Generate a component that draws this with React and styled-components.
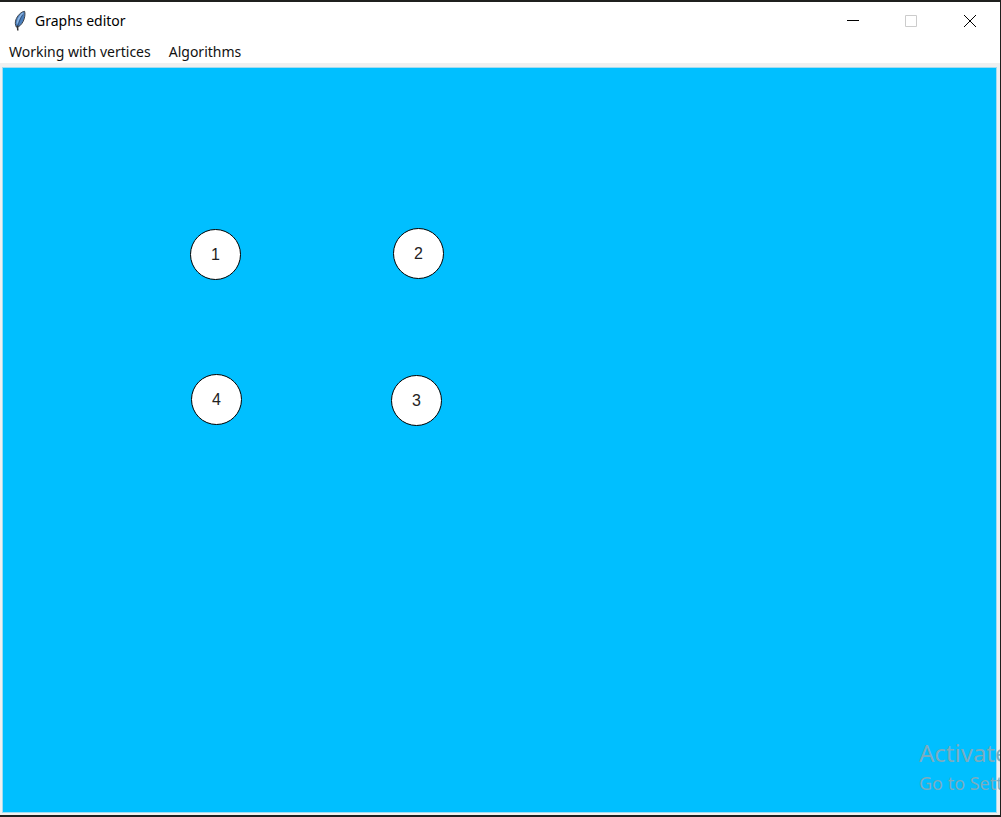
import React from "react";
import styled, { createGlobalStyle } from "styled-components";

const GlobalStyle = createGlobalStyle`
  *, *::before, *::after { box-sizing: border-box; }
  body { margin: 0; background: #1f201e; }
`;

const Window = styled.main`
  position: relative;
  display: flex;
  flex-direction: column;
  min-height: 100vh;
  overflow: hidden;
  border: solid #1f201e;
  border-width: 2px 1px 2px 0;
  background: #fff;
  color: #000;
  font-family: "Open Sans", "Noto Sans", sans-serif;
`;

const TitleBar = styled.header`
  display: flex;
  align-items: center;
  height: 38px;
  padding-left: 12px;
`;

const Title = styled.h1`
  flex: 1;
  margin: 0 0 0 7px;
  font-family: "Noto Sans", sans-serif;
  font-size: 14px;
  font-weight: 400;
  line-height: 20px;
`;

const Controls = styled.div`
  display: flex;
  height: 100%;
`;

const ControlButton = styled.button`
  display: grid;
  place-items: center;
  width: 59px;
  padding: 0;
  border: 0;
  background: none;
  color: ${({ disabled }) => (disabled ? "#ccc" : "#000")};
`;

const MenuBar = styled.nav`
  display: flex;
  gap: 18px;
  height: 23px;
  padding-left: 9px;
`;

const MenuButton = styled.button`
  padding: 0;
  border: 0;
  background: none;
  color: #111;
  font: 400 14px/24px "Noto Sans", sans-serif;
`;

const CanvasFrame = styled.section`
  display: flex;
  flex: 1;
  padding: 4px 3px 2px 2px;
  background: #f0f0f0;
`;

const Canvas = styled.div`
  position: relative;
  flex: 1;
  border: 1px solid #a2dcf0;
  background: #00bfff;
`;

const Vertex = styled.div`
  position: absolute;
  left: ${({ $x }) => $x}px;
  top: ${({ $y }) => $y}px;
  display: grid;
  place-items: center;
  width: 51px;
  height: 51px;
  border: 1px solid #000;
  border-radius: 50%;
  background: #fff;
  color: #222;
  font: 16px/20px "Liberation Sans", Arial, sans-serif;
`;

const Watermark = styled.aside`
  position: absolute;
  right: -1px;
  bottom: 18px;
  width: 82px;
  overflow: hidden;
  color: #7aacbf;
  font-family: "Noto Sans", sans-serif;
  font-weight: 400;
  white-space: nowrap;
  pointer-events: none;
`;

const WatermarkTitle = styled.p`
  margin: 0;
  font-size: 24px;
  line-height: 32px;
`;

const WatermarkText = styled.p`
  margin: 0;
  font-size: 18px;
  line-height: 28px;
`;

const vertices = [
  { id: 1, x: 187, y: 161 },
  { id: 2, x: 390, y: 160 },
  { id: 3, x: 388, y: 307 },
  { id: 4, x: 188, y: 306 },
];

function FeatherIcon() {
  return (
    <svg width="16" height="22" viewBox="0 0 16 22" aria-hidden="true">
      <path d="M12.6 1.3C9 1.8 5.2 5.8 3.8 10c-.8 2.5-.6 4.8.5 7l1.4.3c3.2-1.8 5.5-5 6.5-8.5.8-2.7 1-5.6.4-7.5Z" fill="#4a7fbd" stroke="#3d434b" />
      <path d="M11 3.2C8 6 6 9 5.4 13.5" fill="none" stroke="#8db5e2" strokeWidth="1.8" />
      <path d="M10.8 4.5C8.2 9 6.6 12.5 5.8 16.5" fill="none" stroke="#29466c" strokeWidth="0.8" />
      <path d="M5.4 15.5 5.8 20.5" stroke="#333" strokeWidth="1.5" />
    </svg>
  );
}

function ControlIcon({ d }) {
  return (
    <svg width="13" height="14" viewBox="0 0 13 14" aria-hidden="true">
      <path d={d} fill="none" stroke="currentColor" />
    </svg>
  );
}

export default function App() {
  return (
    <>
      <GlobalStyle />
      <Window>
        <TitleBar>
          <FeatherIcon />
          <Title>Graphs editor</Title>
          <Controls>
            <ControlButton aria-label="Minimize"><ControlIcon d="M1 6.5H13" /></ControlButton>
            <ControlButton aria-label="Maximize" disabled><ControlIcon d="M.5 1.5H11.5V12.5H.5Z" /></ControlButton>
            <ControlButton aria-label="Close"><ControlIcon d="M0 1 12 13M12 1 0 13" /></ControlButton>
          </Controls>
        </TitleBar>
        <MenuBar>
          <MenuButton>Working with vertices</MenuButton>
          <MenuButton>Algorithms</MenuButton>
        </MenuBar>
        <CanvasFrame>
          <Canvas>
            {vertices.map(({ id, x, y }) => (
              <Vertex key={id} $x={x} $y={y}>{id}</Vertex>
            ))}
          </Canvas>
        </CanvasFrame>
        <Watermark>
          <WatermarkTitle>Activate</WatermarkTitle>
          <WatermarkText>Go to Sett</WatermarkText>
        </Watermark>
      </Window>
    </>
  );
}
